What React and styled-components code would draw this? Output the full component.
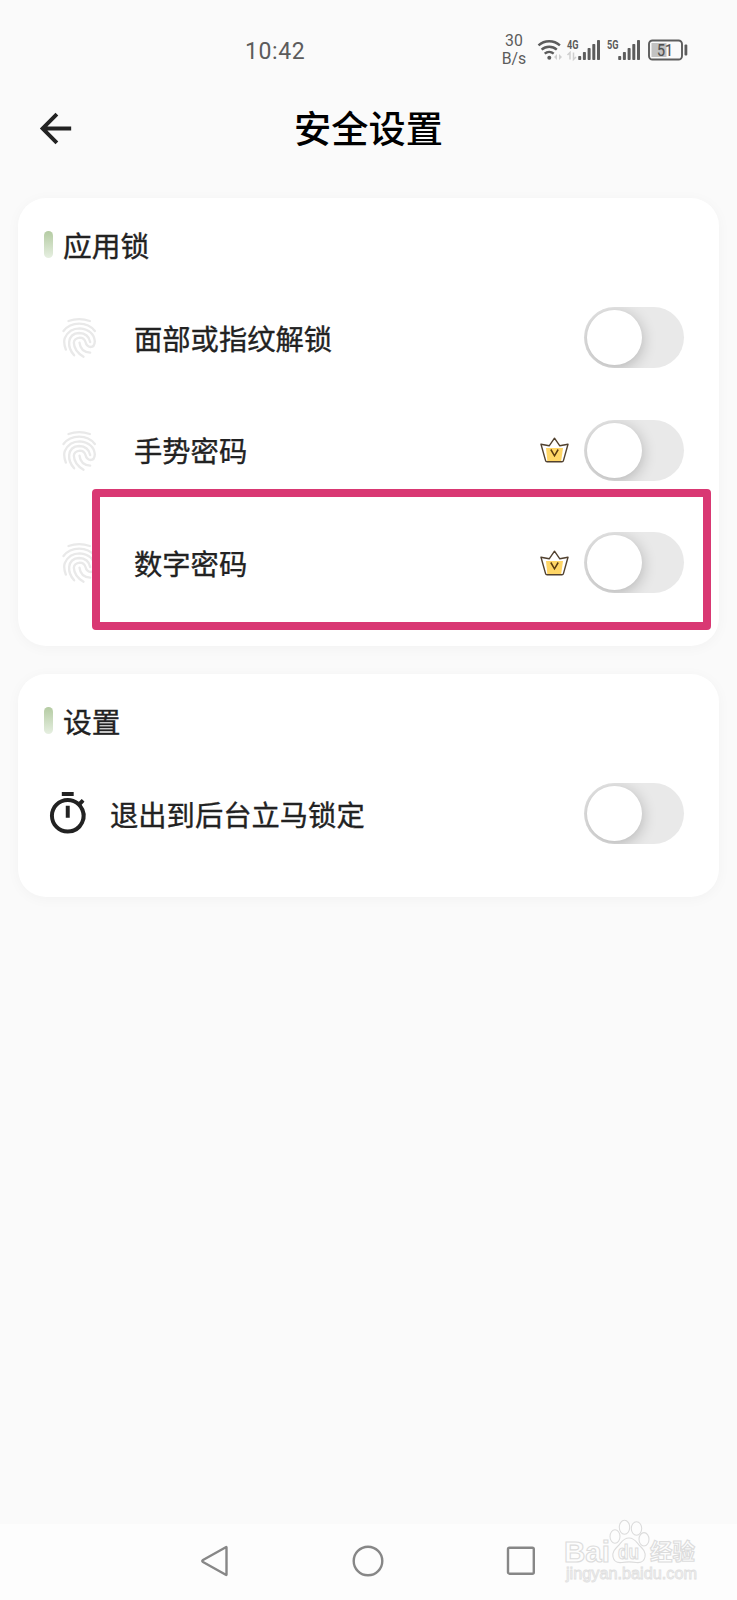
import React, { useState } from "react";
import styled, { createGlobalStyle } from "styled-components";
import { MdArrowBack, MdOutlineTimer } from "react-icons/md";

const GlobalStyle = createGlobalStyle`
  * {
    box-sizing: border-box;
  }
  body {
    margin: 0;
    background: #fafafa;
    font-family: "Noto Sans CJK SC", "Noto Sans", sans-serif;
    color: #222222;
  }
`;

const Screen = styled.div`
  position: relative;
  display: flex;
  flex-direction: column;
  width: 737px;
  height: 1600px;
  overflow: hidden;
  background: #fafafa;
`;

const StatusBar = styled.div`
  display: flex;
  justify-content: space-between;
  align-items: center;
  height: 82px;
  padding: 18px 49px 0 245px;
  font-family: Roboto, sans-serif;
  color: #5c5c5c;
`;

const Clock = styled.div`
  padding-top: 3px;
  font-size: 23px;
  line-height: 28px;
  letter-spacing: 0.6px;
`;

const StatusRight = styled.div`
  display: flex;
  align-items: center;
`;

const NetSpeed = styled.div`
  width: 26px;
  margin-right: 10px;
  font-size: 15.8px;
  line-height: 18px;
  text-align: center;
  white-space: nowrap;
`;

const Header = styled.header`
  display: grid;
  grid-template-columns: 80px 1fr 80px;
  align-items: center;
  height: 94px;
  padding: 0 32px;
`;

const BackButton = styled.button`
  display: flex;
  width: 47px;
  height: 47px;
  margin-bottom: 1px;
  padding: 0;
  border: none;
  background: none;
  color: #222222;
`;

const Title = styled.h1`
  margin: 0 0 4px;
  font-size: 37.2px;
  font-weight: 500;
  line-height: 48px;
  text-align: center;
  color: #000000;
`;

const Cards = styled.main`
  display: flex;
  flex: 1;
  flex-direction: column;
  gap: 28.5px;
  padding: 22px 18px 0;
`;

const Card = styled.section`
  padding: 0 35px 26.5px 26px;
  border-radius: 28px;
  background: #ffffff;
  box-shadow: 0 2px 14px rgba(0, 0, 0, 0.035);
`;

const CardTitle = styled.h2`
  display: flex;
  align-items: center;
  gap: 10px;
  height: 83.5px;
  margin: 0;
  padding-top: 9px;
  font-size: 28.8px;
  font-weight: 400;
  -webkit-text-stroke: 0.35px #222222;
`;

const Accent = styled.span`
  width: 9px;
  height: 27px;
  border-radius: 4.5px;
  background: linear-gradient(#b4cba2, #e6efe1);
`;

const Row = styled.div`
  display: flex;
  align-items: center;
  height: 112.5px;
`;

const RowIcon = styled.span`
  display: flex;
  width: ${(props) => (props.$faded ? "90px" : "66px")};
  padding-left: ${(props) => (props.$faded ? "18px" : "0")};
  color: ${(props) => (props.$faded ? "#e9e9e9" : "#222222")};
`;

const RowLabel = styled.span`
  flex: 1;
  font-size: 28.3px;
  line-height: 40px;
  white-space: nowrap;
  -webkit-text-stroke: 0.35px #222222;
`;

const Track = styled.button`
  width: 100px;
  height: 61px;
  margin-left: 15px;
  padding: 3px;
  border: none;
  border-radius: 31px;
  background: #e9e9e9;
  overflow: hidden;
`;

const Knob = styled.span`
  display: block;
  width: 55px;
  height: 55px;
  border-radius: 50%;
  background: #ffffff;
  box-shadow: 0 3px 15px rgba(0, 0, 0, 0.24);
  transform: translateX(${(props) => (props.$on ? "39px" : "0")});
`;

const Highlight = styled.div`
  position: absolute;
  left: 92px;
  top: 489px;
  width: 619px;
  height: 141px;
  border: 8px solid #d93873;
  border-radius: 4px;
`;

const NavBar = styled.nav`
  display: flex;
  justify-content: space-between;
  align-items: center;
  height: 76px;
  padding: 0 201px 2px 200px;
  background: #fdfdfd;
`;

const Watermark = styled.div`
  position: absolute;
  left: 560px;
  top: 1515px;
`;

const WifiIcon = () => (
  <svg width="27" height="24" viewBox="0 0 27 24" fill="none" stroke="#5c5c5c">
    <path d="M1.5 7.3a16 16 0 0 1 21.4 0" strokeWidth="2.4" />
    <path d="M4.6 11.6a11.5 11.5 0 0 1 15.2 0" strokeWidth="2.4" />
    <path d="M7.7 15.7a7 7 0 0 1 9 0" strokeWidth="2.4" />
    <circle cx="12.3" cy="19.8" r="2" fill="#5c5c5c" stroke="none" />
    <path d="M20 16v6l-3-3zM22 16v6l3-3z" fill="#cfcfcf" stroke="none" />
  </svg>
);

const SignalIcon = ({ label, active }) => (
  <svg width="40" height="24" viewBox="0 0 40 24">
    <text
      x="3"
      y="11"
      fontSize="12.5"
      fontWeight="700"
      fontFamily="Roboto, sans-serif"
      fill="#5c5c5c"
      textLength="11.5"
      lengthAdjust="spacingAndGlyphs"
    >
      {label}
    </text>
    {active && (
      <path
        d="M6 21.5v-7l-2.5 2.5M9.5 14.500v7l2.500-2.500"
        fill="none"
        stroke="#cfcfcf"
        strokeWidth="1.500"
      />
    )}
    {[4, 8, 12, 16, 20].map((h, i) => (
      <rect
        key={h}
        x={14.2 + i * 4.7}
        y={22 - h}
        width="3"
        height={h}
        rx="0.8"
        fill="#5c5c5c"
      />
    ))}
  </svg>
);

const BatteryIcon = ({ level }) => (
  <svg width="44" height="24" viewBox="-3 0 44 24">
    <rect x="4.5" y="5" width="15" height="14" fill="#c2c2c2" />
    <rect
      x="2"
      y="2.5"
      width="33"
      height="19"
      rx="3.5"
      fill="none"
      stroke="#5c5c5c"
      strokeWidth="1.9"
    />
    <rect x="37.5" y="6.5" width="2.8" height="11" rx="1" fill="#5c5c5c" />
    <text
      x="18"
      y="18"
      fontSize="16.5"
      fontWeight="400"
      fontFamily="Roboto, sans-serif"
      textAnchor="middle"
      fill="#505050"
      stroke="#505050"
      strokeWidth="0.2"
      textLength="16"
      lengthAdjust="spacingAndGlyphs"
    >
      {level}
    </text>
  </svg>
);

const FingerprintIcon = () => (
  <svg
    width="35"
    height="43"
    viewBox="39 46 104 129"
    fill="none"
    stroke="currentColor"
    strokeWidth="7"
    strokeLinecap="round"
  >
    <path d="M58 61Q90 50 122 61" />
    <path d="M43 91Q60 69 90 69T137 91" />
    <path d="M50 147Q42 125 47 112Q60 83 92 83Q134 88 137 122Q136 139 124 139Q112 137 109 124Q105 111 92 111Q75 113 74 126Q75 152 103 168" />
    <path d="M75 164Q58 145 60 124Q63 98 90 97Q118 98 123 124" />
    <path d="M123 156Q94 154 91 126" />
  </svg>
);

const CrownIcon = () => (
  <svg width="29" height="26" viewBox="0 0 29 26" fill="none">
    <path d="M6 11h17l-1.8 13H7.3z" fill="#ffd666" />
    <path
      d="M1 7.2l8.2 1.6L14.5 1.2l5.3 7.6L28 7.2l-4.5 16.2q-.3 1.4-1.6 1.4H7.1q-1.3 0-1.6-1.4z"
      stroke="#51412f"
      strokeWidth="1.4"
      strokeLinejoin="round"
    />
    <path
      d="M10.8 12.5l3.7 6.3 3.7-6.3"
      stroke="#5a3a10"
      strokeWidth="1.5"
    />
  </svg>
);

const BackTriangle = () => (
  <svg width="30" height="34" viewBox="0 0 30 34">
    <path
      d="M26.5 3.5v27q0 .7-.7.3L3 18q-1.5-1 0-2L25.8 3.2q.7-.4.7.3z"
      fill="none"
      stroke="#878787"
      strokeWidth="2.4"
      strokeLinejoin="round"
    />
  </svg>
);

const HomeCircle = () => (
  <svg width="32" height="32" viewBox="0 0 32 32">
    <circle
      cx="16"
      cy="16"
      r="14.3"
      fill="none"
      stroke="#878787"
      strokeWidth="2.4"
    />
  </svg>
);

const RecentSquare = () => (
  <svg width="30" height="30" viewBox="0 0 30 30">
    <rect
      x="2"
      y="1.7"
      width="25.8"
      height="26"
      rx="1.5"
      fill="none"
      stroke="#878787"
      strokeWidth="2.4"
    />
  </svg>
);

const BaiduMark = () => (
  <svg
    width="150"
    height="72"
    viewBox="0 0 150 72"
    fill="#fdfdfd"
    stroke="#dcdcdc"
    strokeWidth="1.1"
  >
    <text
      x="4"
      y="46.5"
      fontSize="30"
      fontWeight="700"
      fontFamily="Liberation Sans, sans-serif"
      textLength="46"
      lengthAdjust="spacingAndGlyphs"
    >
      Bai
    </text>
    <ellipse cx="55" cy="21.5" rx="5" ry="6.7" />
    <ellipse cx="64.5" cy="12.3" rx="5.2" ry="7" />
    <ellipse cx="76.5" cy="13.5" rx="5.2" ry="6.7" />
    <ellipse cx="84" cy="24.3" rx="5" ry="6.7" />
    <path d="M69 23c-6 0-8 5-11 8s-6 6-5 11c1 4.5 5 6 9 5.5 3-.5 11-.5 14 0 4 .5 8-1 9-5.5 1-5-2-8-5-11s-5-8-11-8z" />
    <text
      x="58"
      y="44"
      fontSize="20"
      fontWeight="700"
      fontFamily="Liberation Sans, sans-serif"
      textLength="21"
      lengthAdjust="spacingAndGlyphs"
    >
      du
    </text>
    <text
      x="90"
      y="44.5"
      fontSize="22.5"
      fontWeight="700"
      fontFamily="Noto Sans CJK SC, sans-serif"
    >
      经验
    </text>
    <text
      x="6"
      y="64"
      fontSize="16"
      fontFamily="Liberation Sans, sans-serif"
      fill="#f6f6f6"
      stroke="#e0e0e0"
      strokeWidth="0.8"
      textLength="131"
      lengthAdjust="spacingAndGlyphs"
    >
      jingyan.baidu.com
    </text>
  </svg>
);

const Switch = () => {
  const [on, setOn] = useState(false);
  return (
    <Track role="switch" aria-checked={on} onClick={() => setOn(!on)}>
      <Knob $on={on} />
    </Track>
  );
};

const SettingRow = ({ icon: Icon, label, faded, vip }) => {
  return (
    <Row>
      <RowIcon $faded={faded}>
        <Icon size={47.5} />
      </RowIcon>
      <RowLabel>{label}</RowLabel>
      {vip && <CrownIcon />}
      <Switch />
    </Row>
  );
};

const App = () => {
  return (
    <>
      <GlobalStyle />
      <Screen>
        <StatusBar>
          <Clock>10:42</Clock>
          <StatusRight>
            <NetSpeed>
              30
              <br />
              B/s
            </NetSpeed>
            <WifiIcon />
            <SignalIcon label="4G" active />
            <SignalIcon label="5G" />
            <BatteryIcon level={51} />
          </StatusRight>
        </StatusBar>
        <Header>
          <BackButton>
            <MdArrowBack size={47} />
          </BackButton>
          <Title>安全设置</Title>
        </Header>
        <Cards>
          <Card>
            <CardTitle>
              <Accent />
              应用锁
            </CardTitle>
            <SettingRow icon={FingerprintIcon} label="面部或指纹解锁" faded />
            <SettingRow icon={FingerprintIcon} label="手势密码" faded vip />
            <SettingRow icon={FingerprintIcon} label="数字密码" faded vip />
          </Card>
          <Card>
            <CardTitle>
              <Accent />
              设置
            </CardTitle>
            <SettingRow icon={MdOutlineTimer} label="退出到后台立马锁定" />
          </Card>
        </Cards>
        <NavBar>
          <BackTriangle />
          <HomeCircle />
          <RecentSquare />
        </NavBar>
        <Highlight />
        <Watermark>
          <BaiduMark />
        </Watermark>
      </Screen>
    </>
  );
};

export default App;
